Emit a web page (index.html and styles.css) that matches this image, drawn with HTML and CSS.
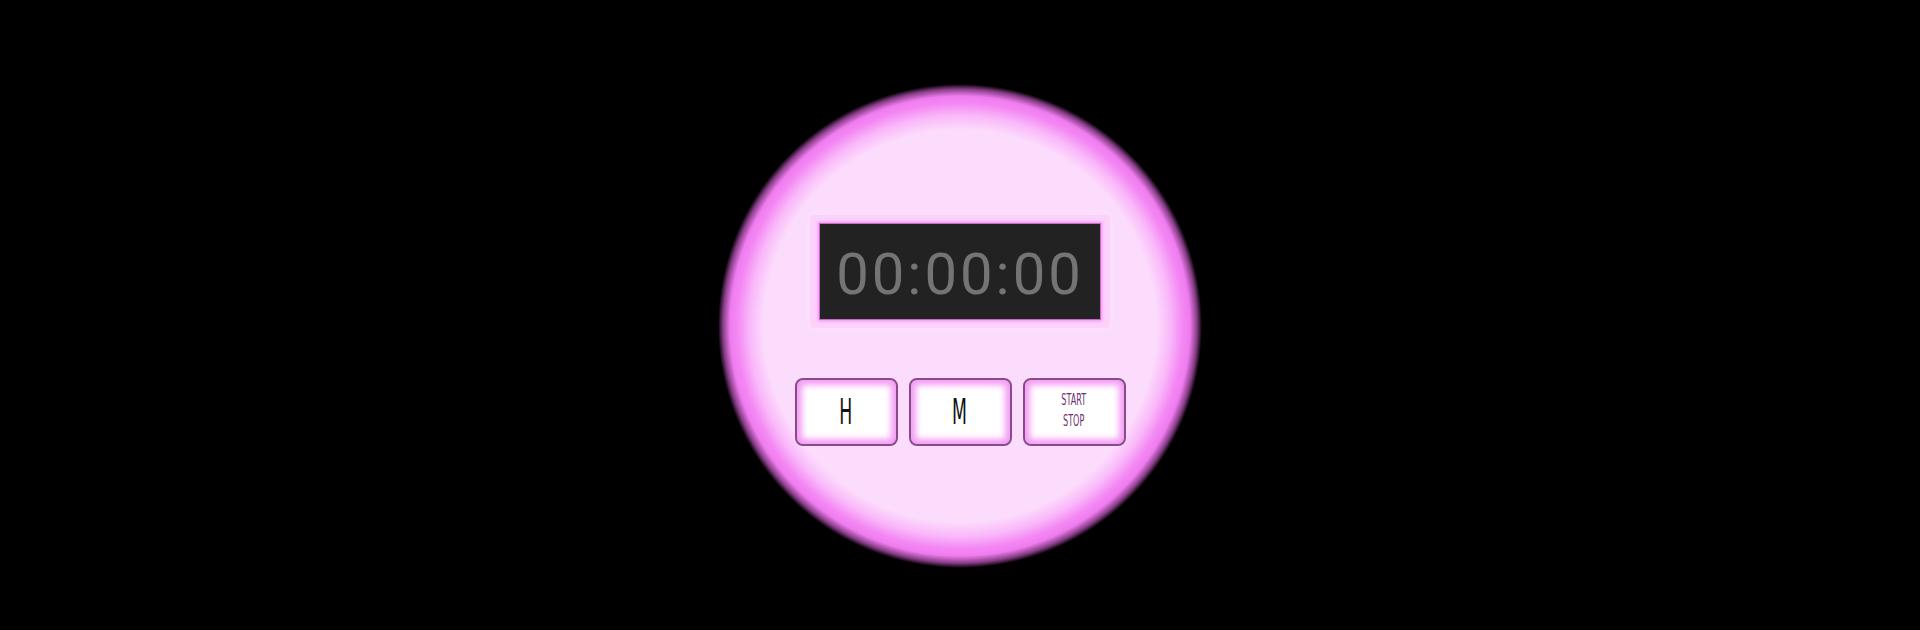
FILE: index.html
```html
<!DOCTYPE html>
<html>
<head>
<meta charset="utf-8">
<link rel="stylesheet" href="styles.css">
</head>
<body>
<div class="timer">
  <div class="display-frame">
    <div class="display">00:00:00</div>
  </div>
  <div class="buttons">
    <div class="btn"><span class="big">H</span></div>
    <div class="btn"><span class="big">M</span></div>
    <div class="btn"><span class="small">START<br>STOP</span></div>
  </div>
</div>
</body>
</html>
```
FILE: styles.css
```css
html, body {
  margin: 0;
  padding: 0;
  background: #000;
}
body {
  width: 1920px;
  height: 630px;
  overflow: hidden;
  display: flex;
  justify-content: center;
  align-items: flex-start;
  padding-top: 84px;
  box-sizing: border-box;
}
.timer {
  width: 484px;
  height: 484px;
  border-radius: 50%;
  background: radial-gradient(closest-side, #fcdcfc 0%, #fcdcfc 81%, #f9b8f9 87%, #f488f4 92%, #f07cf0 95%, rgba(220, 100, 220, 0.6) 98%, rgba(0, 0, 0, 0) 100%);
  display: flex;
  flex-direction: column;
  align-items: center;
  box-sizing: border-box;
  padding-top: 131px;
}
.display-frame {
  padding: 8px 9px;
  background: #fbd2fb;
  border-radius: 4px;
  box-shadow: 0 0 4px 1px #fde2fd;
}
.display {
  width: 282px;
  height: 97px;
  box-sizing: border-box;
  background: #222222;
  border: 1px solid #c868c8;
  box-shadow: 0 0 3px 1px #f090f0;
  color: #747474;
  font-family: Roboto, "Noto Sans", sans-serif;
  font-size: 58px;
  font-weight: 400;
  letter-spacing: 3px;
  display: flex;
  align-items: center;
  justify-content: center;
  padding-top: 4px;
}
.buttons {
  display: flex;
  gap: 11px;
  margin-top: 50px;
}
.btn {
  width: 103px;
  height: 68px;
  box-sizing: border-box;
  border: 2px solid #8a4a8a;
  border-radius: 8px;
  background: #fff;
  box-shadow: inset 0 0 6px 5px #f49cf4;
  display: flex;
  align-items: center;
  justify-content: center;
}
.big {
  font-family: "DejaVu Sans", sans-serif;
  font-weight: 400;
  font-size: 35px;
  color: #111;
  transform: scaleX(0.55);
  display: inline-block;
  font-stretch: condensed;
}
.small {
  font-family: "DejaVu Sans", sans-serif;
  font-stretch: condensed;
  font-weight: 400;
  font-size: 15px;
  line-height: 21px;
  color: #6e306e;
  text-align: center;
  transform: scaleX(0.6);
  display: inline-block;
  margin-top: -2px;
}
```
